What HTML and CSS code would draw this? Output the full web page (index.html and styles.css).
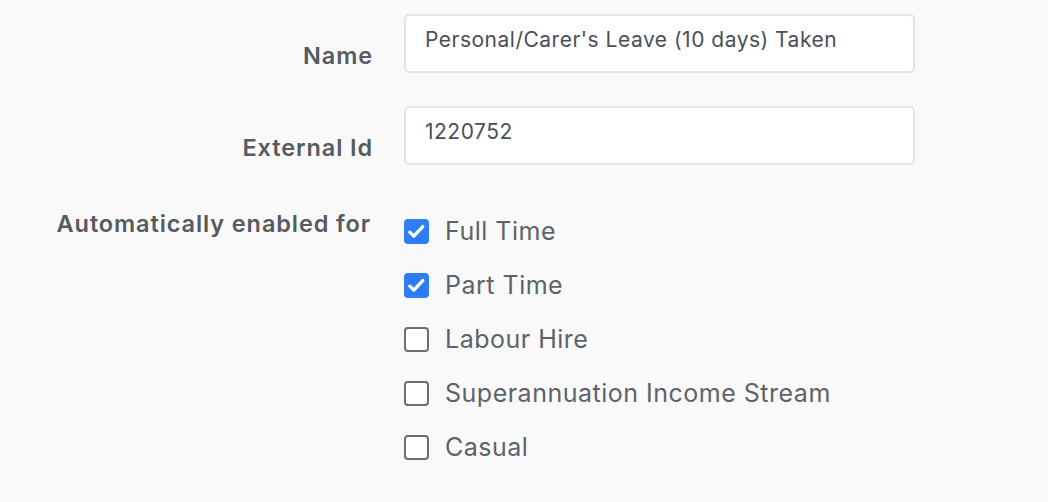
FILE: index.html
```html
<!DOCTYPE html>
<html>
<head>
<meta charset="utf-8">
<link rel="stylesheet" href="styles.css">
</head>
<body>
<form class="form">
  <label class="label label-input" for="name">Name</label>
  <div class="control"><input id="name" class="text-input" type="text" value="Personal/Carer's Leave (10 days) Taken"></div>

  <label class="label label-input" for="ext">External Id</label>
  <div class="control"><input id="ext" class="text-input" type="text" value="1220752"></div>

  <div class="label label-group">Automatically enabled for</div>
  <div class="control checks">
    <label class="check"><span class="box checked"><svg viewBox="0 0 25 25"><path d="M5.8 13.2l4 4 9-9.6" fill="none" stroke="#fff" stroke-width="3.3" stroke-linecap="round" stroke-linejoin="round"/></svg></span><span class="check-text">Full Time</span></label>
    <label class="check"><span class="box checked"><svg viewBox="0 0 25 25"><path d="M5.8 13.2l4 4 9-9.6" fill="none" stroke="#fff" stroke-width="3.3" stroke-linecap="round" stroke-linejoin="round"/></svg></span><span class="check-text">Part Time</span></label>
    <label class="check"><span class="box"></span><span class="check-text">Labour Hire</span></label>
    <label class="check"><span class="box"></span><span class="check-text">Superannuation Income Stream</span></label>
    <label class="check"><span class="box"></span><span class="check-text">Casual</span></label>
  </div>
</form>
</body>
</html>
```

FILE: styles.css
```css
html, body {
  margin: 0;
  padding: 0;
  background: #f9f9f9;
  height: 100%;
}
body {
  font-family: Inter, "Open Sans", Arial, sans-serif;
  color: #52585e;
}
.form {
  display: grid;
  grid-template-columns: 373px 511px;
  column-gap: 31px;
  row-gap: 33px;
  padding-top: 14px;
}
.label {
  text-align: right;
  font-size: 23.5px;
  font-weight: 600;
  line-height: 30px;
  color: #555b61;
  letter-spacing: 0.9px;
}
.label-input {
  padding-top: 27px;
}
.label-group {
  padding-top: 11px;
  padding-right: 2px;
}
.text-input {
  box-sizing: border-box;
  width: 511px;
  height: 59px;
  border: 2px solid #e3e5e8;
  border-radius: 5px;
  background: #fff;
  padding: 0 19px 9px;
  font-family: inherit;
  font-size: 21px;
  letter-spacing: 0.5px;
  color: #4b5056;
  outline: none;
}
.checks {
  display: flex;
  flex-direction: column;
  margin-top: 6px;
}
.check {
  display: flex;
  align-items: center;
  height: 54px;
}
.box {
  box-sizing: border-box;
  flex: none;
  width: 25px;
  height: 25px;
  border: 2px solid #6b6f74;
  border-radius: 4px;
  background: #fff;
  margin-right: 16px;
}
.box.checked {
  background: #2f7df6;
  border: none;
}
.box svg {
  width: 25px;
  height: 25px;
  display: block;
}
.check-text {
  font-size: 25px;
  color: #5d636a;
  letter-spacing: 0.5px;
}
```
